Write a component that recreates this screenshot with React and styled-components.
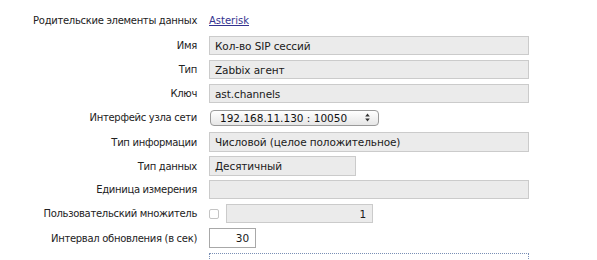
import React from 'react';
import styled, { createGlobalStyle } from 'styled-components';

const GlobalStyle = createGlobalStyle`
	body {
		margin: 0;
		background: #fff;
		font-family: "DejaVu Sans", Verdana, sans-serif;
		font-size: 10px;
		color: #222;
	}
`;

const Form = styled.div`
	display: flex;
	flex-direction: column;
	gap: 5px;
	padding-top: 9px;
	width: 597px;
	height: 260px;
	overflow: hidden;
	box-sizing: border-box;
`;

const Row = styled.div`
	flex-shrink: 0;
	display: grid;
	grid-template-columns: 197px 1fr;
	column-gap: 12px;
	align-items: ${props => props.top ? 'start' : 'center'};
	height: ${props => props.h || 19}px;
`;

const Label = styled.div`
	text-align: right;
	white-space: nowrap;
	color: #222;
	letter-spacing: -0.3px;
	padding-top: ${props => props.pt || 0}px;
`;

const Field = styled.div`
	display: flex;
	align-items: center;
	gap: 7px;
`;

const Link = styled.a`
	color: #33338f;
	text-decoration: underline;
	cursor: pointer;
`;

const Box = styled.div`
	box-sizing: border-box;
	width: ${props => props.w}px;
	height: ${props => props.h || 19}px;
	border: 1px solid ${props => props.white ? '#a8a8a8' : '#cbcbcb'};
	background: ${props => props.white ? '#fff' : '#ebebeb'};
	padding: 0 6px 0 5px;
	display: flex;
	align-items: center;
	justify-content: ${props => props.right ? 'flex-end' : 'flex-start'};
	color: #1a1a1a;
	white-space: nowrap;
	letter-spacing: -0.1px;
	font-size: 10.5px;
`;

const Select = styled.div`
	box-sizing: border-box;
	width: 169px;
	height: 16px;
	margin-left: 1px;
	border: 1px solid #9a9a9a;
	border-radius: 4px;
	background: linear-gradient(#ffffff, #e6e6e6);
	display: flex;
	align-items: center;
	justify-content: space-between;
	padding: 0 8px 0 9px;
	color: #111;
	font-size: 10.5px;
`;

const Check = styled.div`
	box-sizing: border-box;
	width: 10px;
	height: 10px;
	border: 1px solid #c4c4c4;
	border-radius: 2px;
	background: #fff;
`;

const Dotted = styled.div`
	box-sizing: border-box;
	width: 320px;
	height: 40px;
	border: 1px dotted #7a8fb5;
`;

const Arrows = () => (
	<svg width="5" height="9" viewBox="0 0 5 9">
		<path d="M2.5 0.5 L4.8 3.5 H0.2 Z" fill="#333" />
		<path d="M2.5 8.5 L4.8 5.5 H0.2 Z" fill="#333" />
	</svg>
);

const App = () => (
	<>
		<GlobalStyle />
		<Form>
			<Row h={22}>
				<Label>Родительские элементы данных</Label>
				<Field><Link>Asterisk</Link></Field>
			</Row>
			<Row>
				<Label>Имя</Label>
				<Box w={320}>Кол-во SIP сессий</Box>
			</Row>
			<Row>
				<Label>Тип</Label>
				<Box w={320}>Zabbix агент</Box>
			</Row>
			<Row>
				<Label>Ключ</Label>
				<Box w={320}>ast.channels</Box>
			</Row>
			<Row>
				<Label>Интерфейс узла сети</Label>
				<Field>
					<Select>
						<span>192.168.11.130 : 10050</span>
						<Arrows />
					</Select>
				</Field>
			</Row>
			<Row>
				<Label>Тип информации</Label>
				<Box w={320} h={20}>Числовой (целое положительное)</Box>
			</Row>
			<Row>
				<Label>Тип данных</Label>
				<Box w={147} h={20}>Десятичный</Box>
			</Row>
			<Row>
				<Label>Единица измерения</Label>
				<Box w={320} />
			</Row>
			<Row>
				<Label>Пользовательский множитель</Label>
				<Field>
					<Check />
					<Box w={147} right>1</Box>
				</Field>
			</Row>
			<Row h={20}>
				<Label>Интервал обновления (в сек)</Label>
				<Box w={47} h={20} white right>30</Box>
			</Row>
			<Row h={40} top>
				<Label pt={7}>Гибкие интервалы (сек)</Label>
				<Dotted />
			</Row>
		</Form>
	</>
);

export default App;
